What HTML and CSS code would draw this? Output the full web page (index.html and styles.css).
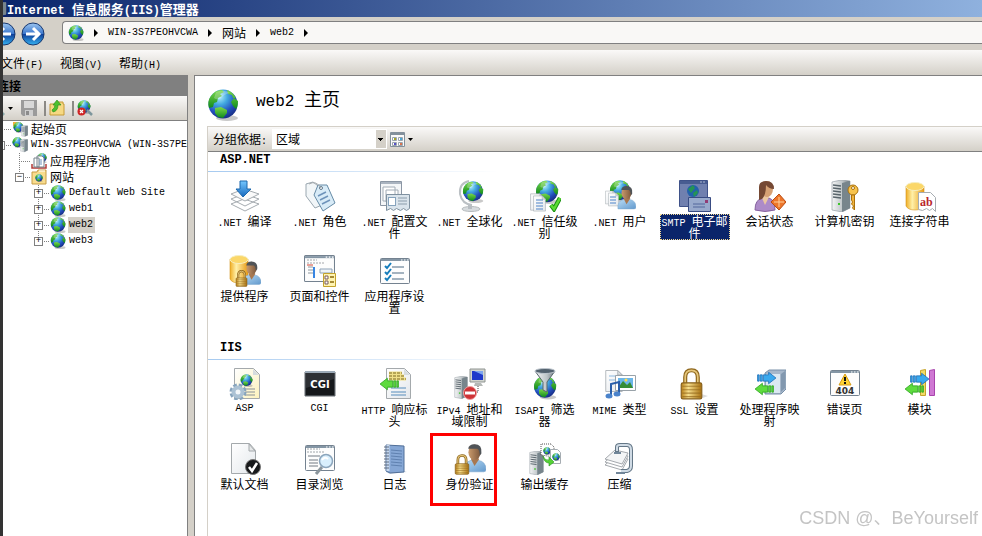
FILE: index.html
```
<!DOCTYPE html>
<html lang="zh-CN">
<head>
    <meta charset="UTF-8">
    <meta name="viewport" content="width=device-width, initial-scale=1.0">
    <title>Internet 信息服务(IIS)管理器</title>
    <link rel="stylesheet" href="styles.css">
</head>
<body>
    <!-- shared icon parts -->
    <svg class="defs" width="0" height="0" aria-hidden="true">
        <defs>
            <radialGradient id="sea" cx="38%" cy="25%" r="78%">
                <stop offset="0" stop-color="#b5f0fb"/><stop offset=".35" stop-color="#43a9e0"/>
                <stop offset=".7" stop-color="#2450bd"/><stop offset="1" stop-color="#182c83"/>
            </radialGradient>
            <linearGradient id="land" x2="0" y2="1"><stop stop-color="#7bd84a"/><stop offset="1" stop-color="#108a1c"/></linearGradient>
            <linearGradient id="gold"><stop stop-color="#b87f16"/><stop offset=".35" stop-color="#f7df8c"/><stop offset="1" stop-color="#a8700f"/></linearGradient>
            <linearGradient id="yellow"><stop stop-color="#efae25"/><stop offset=".35" stop-color="#fff0a8"/><stop offset="1" stop-color="#e79a16"/></linearGradient>
            <linearGradient id="metal"><stop stop-color="#f5f6f6"/><stop offset=".6" stop-color="#bcc3c6"/><stop offset="1" stop-color="#68747b"/></linearGradient>
            <linearGradient id="shirt" x2="1" y2="1"><stop stop-color="#b9dcf5"/><stop offset="1" stop-color="#6299cd"/></linearGradient>
            <linearGradient id="skin"><stop stop-color="#c99a6c"/><stop offset="1" stop-color="#7c573c"/></linearGradient>
            <linearGradient id="paper" x2="1" y2="1"><stop stop-color="#fff"/><stop offset="1" stop-color="#e4e8ec"/></linearGradient>
            <linearGradient id="cream" x2="1" y2="1"><stop stop-color="#fff"/><stop offset="1" stop-color="#fcf2bd"/></linearGradient>
            <linearGradient id="blue" x2="0" y2="1"><stop stop-color="#74c7ff"/><stop offset="1" stop-color="#1668bd"/></linearGradient>
            <linearGradient id="navball" x2="0" y2="1"><stop stop-color="#9dc6f0"/><stop offset=".48" stop-color="#3c78cd"/><stop offset=".52" stop-color="#0f4099"/><stop offset="1" stop-color="#36b4f3"/></linearGradient>
        </defs>
        <symbol id="globe" viewBox="0 0 32 32">
            <ellipse cx="20" cy="29" rx="11" ry="3" fill="#777" opacity=".4"/>
            <circle cx="16" cy="15" r="14.5" fill="url(#sea)"/>
            <path d="M4 7Q8 1 15 1l2 2-4 2 2 2-4 2-1 4-3 1-1 4-4 1Q0 12 4 7z" fill="url(#land)"/>
            <path d="M20 1q6 2 9 8l-3 0-1-3-4-1zM27 9l4 3q0 6-2 8l-3-3-2-4z" fill="url(#land)"/>
            <path d="M8 19l6-1 6 3 0 3-4 5-5-1-3-4z" fill="url(#land)"/>
            <path d="M9 3q8-3 14 1-6 1-10 6-4 1-6-1z" fill="#fff" opacity=".25"/>
        </symbol>
        <symbol id="person" viewBox="0 0 20 24">
            <path d="M1 24q-1-8 6-10h6q7 1 7 8 0 2-2 2z" fill="url(#shirt)" stroke="#7aa5cc" stroke-width=".5"/>
            <path d="M7 13l3 6 4-6-2-3H8z" fill="#a87850"/>
            <ellipse cx="10" cy="7" rx="5.3" ry="6.8" fill="url(#skin)"/>
            <path d="M4.500 4Q5 0 10 0q7 0 6 8l-1.500 2q0-5-2-6-4 0-8 0z" fill="#505458"/>
        </symbol>
        <symbol id="lock" viewBox="0 0 20 28">
            <path d="M4.500 14V8q0-6 5.500-6t5.500 6v6" fill="none" stroke="#8e661c" stroke-width="3.600"/>
            <path d="M4.500 14V8q0-6 5.500-6t5.500 6v6" fill="none" stroke="#e5c67a" stroke-width="1.500"/>
            <rect x="1" y="13" width="18" height="14" rx="1.500" fill="url(#gold)" stroke="#87601b"/>
            <path d="M2 16h16M2 19h16M2 22h16M2 25h16" stroke="#94691d" opacity=".7"/>
        </symbol>
        <symbol id="doc" viewBox="0 0 24 30">
            <path d="M1 1h16l6 6v22H1z" fill="url(#paper)" stroke="#9da4aa"/>
            <path d="M17 1v6h6z" fill="#dce0e3" stroke="#9da4aa"/>
        </symbol>
        <symbol id="window" viewBox="0 0 30 26">
            <rect x=".5" y=".5" width="29" height="25" rx="1" fill="#fdfdfd" stroke="#748290"/>
            <path d="M1 2h28" stroke="#8496a5" stroke-width="2"/>
            <path d="M21 2h1.500M24 2h1.500M27 2h1.500" stroke="#fff"/>
        </symbol>
        <symbol id="server" viewBox="0 0 20 32">
            <path d="M1 2l9-2 9 1v27l-8 4-10-2z" fill="url(#metal)" stroke="#88929a" stroke-width=".6"/>
            <path d="M11 3l8-2v27l-8 4z" fill="#77858c"/>
            <path d="M2 5l8 1M2 8l8 1M2 11l8 1M2 14l8 1M2 17l8 1" stroke="#59656c" stroke-width="1.300"/>
            <path d="M7 24h2" stroke="#3cc52a" stroke-width="2"/>
        </symbol>
        <symbol id="cylinder" viewBox="0 0 20 28">
            <path d="M1 4v20q2 4 9 4t9-4V4z" fill="url(#yellow)" stroke="#d4941c" stroke-width=".6"/>
            <ellipse cx="10" cy="4.500" rx="9" ry="4" fill="#fbd769" stroke="#f6eec0"/>
        </symbol>
        <symbol id="go-left" viewBox="0 0 20 12">
            <path d="M1 6l7-5.500V3h5v6H8v2.500zM14 3h2v6h-2zM17 3h1.500v6H17z" fill="#5edb3e" stroke="#239e19" stroke-width=".7"/>
        </symbol>
        <symbol id="go-right" viewBox="0 0 20 12">
            <path d="M19 6L12 .5V3H7v6h5v2.500zM4 3h2v6H4zM1.500 3H3v6H1.500z" fill="#39a9ee" stroke="#1667b3" stroke-width=".7"/>
        </symbol>
        <symbol id="crumb" viewBox="0 0 4 8"><path d="M0 0l4 4-4 4z"/></symbol>
        <symbol id="drop" viewBox="0 0 5 3"><path d="M0 0h5L2.500 3z"/></symbol>
    </svg>

    <header class="titlebar">
        <svg width="7" height="14" viewBox="13 0 7 32" preserveAspectRatio="none"><use href="#server" width="20" height="32"/></svg>
        <h1><span class="en">Internet </span>信息服务<span class="en">(IIS)</span>管理器</h1>
    </header>

    <nav class="navbar">
        <div class="history">
            <button type="button" aria-label="后退"><svg viewBox="0 0 24 24"><circle cx="12" cy="12" r="11" fill="url(#navball)" stroke="#17376e"/><path d="M19 12H7M12 6l-6 6 6 6" fill="none" stroke="#fff" stroke-width="3"/></svg></button>
            <button type="button" aria-label="前进"><svg viewBox="0 0 24 24"><circle cx="12" cy="12" r="11" fill="url(#navball)" stroke="#17376e"/><path d="M5 12h12M12 6l6 6-6 6" fill="none" stroke="#fff" stroke-width="3"/></svg></button>
        </div>
        <div class="address">
            <svg width="16" height="16"><use href="#globe"/></svg>
            <svg class="sep" width="4" height="8"><use href="#crumb"/></svg>
            <a href="#" class="en">WIN-3S7PEOHVCWA</a>
            <svg class="sep" width="4" height="8"><use href="#crumb"/></svg>
            <a href="#">网站</a>
            <svg class="sep" width="4" height="8"><use href="#crumb"/></svg>
            <a href="#" class="en">web2</a>
            <svg class="sep" width="4" height="8"><use href="#crumb"/></svg>
        </div>
    </nav>

    <div class="menubar">
        <button type="button">文件<span class="en">(F)</span></button>
        <button type="button">视图<span class="en">(V)</span></button>
        <button type="button">帮助<span class="en">(H)</span></button>
    </div>

    <div class="workspace">
        <aside class="connections">
            <h2>连接</h2>
            <div class="toolbar">
                <button type="button" aria-label="连接到"><svg width="16" height="16" viewBox="0 0 16 16"><use href="#globe" width="12" height="12"/><path d="M9 9l6 6" stroke="#8ba9a9" stroke-width="3"/></svg><svg width="5" height="3"><use href="#drop"/></svg></button>
                <button type="button" aria-label="保存" disabled><svg width="16" height="16" viewBox="0 0 16 16"><path d="M0 0h16v16H2l-2-2z" fill="#9b9b9b"/><path d="M3 1h10v7H3z" fill="#d8d8d8"/><path d="M4 10h8v6H4z" fill="#cfcfcf"/><path d="M5 11h3v4H5z" fill="#8c8c8c"/></svg></button>
                <i></i>
                <button type="button" aria-label="上移"><svg width="16" height="16" viewBox="0 0 16 16"><path d="M1 4h6l1-2h6v2h1v11H1z" fill="#f6d983" stroke="#c69a37"/><path d="M4 12q5-1 5-7h3L8 0 4 5h2q0 3-3 5z" fill="#4bc02d" stroke="#278818" stroke-width=".6"/></svg></button>
                <i></i>
                <button type="button" aria-label="删除连接"><svg width="16" height="16" viewBox="0 0 16 16"><use href="#globe" width="14" height="14"/><path d="M10 10l5 5" stroke="#7d969c" stroke-width="2.500"/><circle cx="4.500" cy="11.500" r="4" fill="#cf2424"/><path d="M3 10l3 3M6 10l-3 3" stroke="#fff" stroke-width="1.200"/></svg></button>
            </div>
            <ul class="tree">
                <li>
                    <div class="node"><span class="branch"></span><svg width="16" height="16" viewBox="0 0 16 16"><path d="M1 1h6v4H1z" fill="#f1b33a"/><use href="#globe" x="1" y="1" width="11" height="11"/><use href="#server" x="9" y="4" width="7" height="12"/></svg><a href="#">起始页</a></div>
                </li>
                <li>
                    <div class="node"><span class="branch"><button type="button" aria-label="折叠">−</button></span><svg width="16" height="16" viewBox="0 0 16 16"><use href="#globe" width="11" height="11"/><use href="#server" x="8" y="1" width="8" height="15"/></svg><a href="#" class="en">WIN-3S7PEOHVCWA (WIN-3S7PEOHVCWA\Administrator)</a></div>
                    <ul>
                        <li>
                            <div class="node"><span class="branch"></span><svg width="16" height="16" viewBox="0 0 16 16"><use href="#globe" x="6" width="10" height="10"/><path d="M1 11v4h14v-4" fill="none" stroke="#b33b38" stroke-width="1.500"/><path d="M3 5h5v9H3zM6 3h5l2 2v9H6z" fill="#fff" stroke="#77838c"/><path d="M8 7h3M8 9h3M8 11h3" stroke="#6b91ba"/></svg><a href="#">应用程序池</a></div>
                        </li>
                        <li>
                            <div class="node"><span class="branch last"><button type="button" aria-label="折叠">−</button></span><svg width="16" height="16" viewBox="0 0 16 16"><path d="M1 3h5l1-2h8v14H1z" fill="#f8dc8d" stroke="#c69c45"/><path d="M8 2h6" stroke="#fff"/><use href="#globe" x="4" y="5" width="8" height="8"/></svg><a href="#">网站</a></div>
                            <ul>
                                <li><div class="node"><span class="branch"><button type="button" aria-label="展开">+</button></span><svg width="16" height="16"><use href="#globe"/></svg><a href="#" class="en">Default Web Site</a></div></li>
                                <li><div class="node"><span class="branch"><button type="button" aria-label="展开">+</button></span><svg width="16" height="16"><use href="#globe"/></svg><a href="#" class="en">web1</a></div></li>
                                <li><div class="node"><span class="branch"><button type="button" aria-label="展开">+</button></span><svg width="16" height="16"><use href="#globe"/></svg><a href="#" class="en current">web2</a></div></li>
                                <li><div class="node"><span class="branch last"><button type="button" aria-label="展开">+</button></span><svg width="16" height="16"><use href="#globe"/></svg><a href="#" class="en">web3</a></div></li>
                            </ul>
                        </li>
                    </ul>
                </li>
            </ul>
        </aside>

        <main>
            <div class="page-title">
                <svg width="32" height="34"><use href="#globe"/></svg>
                <h2><span class="en">web2 </span>主页</h2>
            </div>
            <div class="features">
                <div class="groupbar">
                    <label for="groupBy">分组依据<span class="en">:</span></label>
                    <select id="groupBy">
                        <option>区域</option>
                        <option>类别</option>
                        <option>不进行分组</option>
                    </select>
                    <button type="button" aria-label="视图"><svg width="15" height="15" viewBox="0 0 15 15"><path d="M.5.5h14v14H.5z" fill="#fafafa" stroke="#83909b"/><path d="M1 2h13" stroke="#83909b" stroke-width="2"/><path d="M2.500 5.500h4v3h-4zM8.500 5.500h4v3h-4zM2.500 10.500h4v3h-4zM8.500 10.500h4v3h-4z" fill="#fff" stroke="#9aa5ad"/><path d="M4 7h2" stroke="#a5a428" stroke-width="2"/><path d="M10 7h2" stroke="#4ca6d3" stroke-width="2"/><path d="M4 12h2" stroke="#5550c7" stroke-width="2"/><path d="M10 12h2" stroke="#d87350" stroke-width="2"/></svg><svg width="5" height="3"><use href="#drop"/></svg></button>
                </div>

                <h3>ASP.NET</h3>
                <div class="items">
                    <a href="#"><svg viewBox="0 0 32 32"><path d="M2 24l13-5 15 5-14 7zM2 19l13-5 15 5-14 7z" fill="#fff" stroke="#a5abb0"/><path d="M2 14l13-5 15 5-14 7z" fill="#fafafa" stroke="#a5abb0"/><path d="M11 1h7v8h4l-8 8-7-8h4z" fill="url(#blue)" stroke="#1c68ae"/></svg><span><span class="en">.NET </span>编译</span></a>
                    <a href="#"><svg viewBox="0 0 32 32"><path d="M2 4l7-2 9 7v16l-7 3-9-12z" fill="#f2f6f8" stroke="#9aa7b0"/><path d="M14 5l9 0 8 18-12 8-9-16z" fill="#d8ebf7" stroke="#668ba6"/><path d="M14 16l8-4M16 20l8-4M18 24l8-4" stroke="#6e93ba" stroke-width="1.500"/><circle cx="17" cy="8" r="1.500" fill="#fff" stroke="#647a8c"/><path d="M17 8Q12 0 5 4" fill="none" stroke="#a5a9ac"/></svg><span><span class="en">.NET </span>角色</span></a>
                    <a href="#"><svg viewBox="0 0 32 32"><path d="M1.500 1.500h21v24h-21z" fill="#f4f6f8" stroke="#8b96a4"/><path d="M2 3h20" stroke="#aab4c0" stroke-width="2"/><path d="M4 7h12v14H4zM7 10h12v12H7z" fill="#fff" stroke="#a2acb6"/><path d="M7.500 14.500h23v14l-3 2-3-2-3 2-4-2-3 2-3-2-4 2z" fill="#dae4ec" stroke="#7f91a0"/><rect x="9.500" y="17.500" width="7" height="8" fill="#fff" stroke="#86a3bd"/><path d="M19 18h9M19 21h9M19 24h9" stroke="#8b9cab"/></svg><span><span class="en">.NET </span>配置文件</span></a>
                    <a href="#"><svg viewBox="0 0 32 32"><ellipse cx="17" cy="29" rx="9" ry="2.500" fill="#d7dbde" stroke="#b5babd"/><path d="M16 25v4" stroke="#b7bdc2" stroke-width="4"/><path d="M15 1Q5 3 6 14q2 10 12 11" fill="none" stroke="#bbc0c4" stroke-width="2"/><use href="#globe" x="8" y="1" width="22" height="22"/></svg><span><span class="en">.NET </span>全球化</span></a>
                    <a href="#"><svg viewBox="0 0 32 32"><use href="#globe" x="6" width="24" height="24"/><use href="#doc" x="1" y="13" width="14" height="18"/><use href="#doc" x="4" y="15" width="13" height="17"/><path d="M7 20h7M7 23h7M7 26h7M7 29h7" stroke="#4d83c9"/><path d="M22 25l3 4 6-11" fill="none" stroke="#189010" stroke-width="4.500"/><path d="M22 25l3 4 6-11" fill="none" stroke="#5bdb32" stroke-width="2.500"/></svg><span><span class="en">.NET </span>信任级别</span></a>
                    <a href="#"><svg viewBox="0 0 32 32"><use href="#globe" x="5" width="22" height="22"/><use href="#doc" x="1" y="10" width="11" height="15"/><use href="#doc" x="4" y="12" width="11" height="15"/><path d="M6 17h6M6 20h6M6 23h6" stroke="#4d83c9"/><use href="#person" x="13" y="4" width="19" height="27"/></svg><span><span class="en">.NET </span>用户</span></a>
                    <a href="#" class="selected"><svg viewBox="0 0 32 32"><path d="M.5.500h28v26H.5z" fill="#7080af" stroke="#3f5289"/><path d="M1 2.500h27" stroke="#485c91" stroke-width="3"/><path d="M21 2h2M24 2h2" stroke="#aab6d0"/><circle cx="14" cy="11" r="6" fill="#2361ab"/><path d="M9 9l5-4 2 3-4 5zM14 13l4-3 1 3-4 4z" fill="#259354"/><path d="M9.500 17.500h22v14h-22z" fill="#98a9cc" stroke="#394c83"/><path d="M14 24h12M14 27h12" stroke="#52679b"/><path d="M26 20h3v3h-3z" fill="#903c75"/></svg><span><span class="en">SMTP </span>电子邮件</span></a>
                    <a href="#"><svg viewBox="0 0 32 32"><path d="M1 30q0-11 8-12h6q6 2 6 12-10 3-20 0z" fill="#ad8bc8" stroke="#86639f"/><path d="M8 18l3 7 4-8-2-4H9z" fill="#ebc7a2"/><ellipse cx="13" cy="9" rx="6" ry="8" fill="#d6a174"/><path d="M5 20V7q0-6 7-6 8 0 8 8-5 0-8-4 0 10-4 14z" fill="#754833"/><path d="M25 14l7 8-7 8-8-8z" fill="#ed762b" stroke="#ba4c13"/><path d="M25 17v10M20 22h10" stroke="#ffd29e"/></svg><span>会话状态</span></a>
                    <a href="#"><svg viewBox="0 0 32 32"><use href="#server" x="2" y="0" width="20" height="32"/><circle cx="24" cy="10" r="5" fill="#f7c34d" stroke="#aa710c"/><circle cx="24" cy="8" r="1.500" fill="#fff" stroke="#aa710c"/><path d="M22.500 15h3v15l-2-2 1-2-2-2 1-2-1-2z" fill="#f1b33c" stroke="#aa710c"/></svg><span>计算机密钥</span></a>
                    <a href="#"><svg viewBox="0 0 32 32"><use href="#cylinder" x="1" y="0" width="20" height="32"/><path d="M14.500 12.500h12l5 5v14l-3-3-3 2-3-2-4 2-4-1z" fill="#fff" stroke="#a6acb1"/><text x="16" y="26" class="ab">ab</text></svg><span>连接字符串</span></a>
                    <a href="#"><svg viewBox="0 0 32 32"><use href="#cylinder" x="0" y="0" width="20" height="28"/><use href="#person" x="13" y="5" width="19" height="26"/><use href="#lock" x="6" y="15" width="13" height="17"/></svg><span>提供程序</span></a>
                    <a href="#"><svg viewBox="0 0 32 32"><use href="#window" x="0" y="0" width="31" height="27"/><path d="M3 5h10M3 8h17" stroke="#a3a6aa" stroke-dasharray="2 1"/><path d="M4 12h5M4 15h6M4 18h6" stroke="#8d979e"/><path d="M10 12v11" stroke="#3785e2" stroke-width="2"/><path d="M3 10h6" stroke="#d74735"/><path d="M16 14h12v4H16z" fill="#eef3f8" stroke="#8fa3b7"/><path d="M19.500 18.500h12v13h-12z" fill="#fff4b2" stroke="#c3a22d"/><path d="M21 21h3v3h-3zM21 26h3v3h-3z" fill="#fff" stroke="#785b5c"/><path d="M26 22h4M26 27h4" stroke="#a68b36" stroke-width="2"/></svg><span>页面和控件</span></a>
                    <a href="#"><svg viewBox="0 0 32 32"><use href="#window" x="1" y="3" width="30" height="26"/><path d="M13 12h12M13 18h12M13 24h12" stroke="#879aac" stroke-width="1.500"/><path d="M6 11l2 2 4-5M6 17l2 2 4-5M6 23l2 2 4-5" fill="none" stroke="#167dbc" stroke-width="2"/></svg><span>应用程序设置</span></a>
                </div>

                <h3>IIS</h3>
                <div class="items">
                    <a href="#"><svg viewBox="0 0 32 32"><path d="M5.500.5h19l6 6v24h-25z" fill="url(#cream)" stroke="#a4a9ac"/><path d="M24 1v6h6z" fill="#d6dcdf"/><use href="#globe" x="11" y="6" width="13" height="13"/><path d="M16 21h10M16 24h10M16 27h10" stroke="#899197"/><circle cx="9" cy="24" r="6" fill="none" stroke="#87a4bd" stroke-width="5" stroke-dasharray="3 1.700"/><circle cx="9" cy="24" r="4.500" fill="#f2f6f9" stroke="#acc2d4" stroke-width="4"/></svg><span class="en">ASP</span></a>
                    <a href="#"><svg viewBox="0 0 32 32"><path d="M1 4h30v24H1z" fill="#2d3034" stroke="#62686e"/><path d="M1 4h30" stroke="#9ba9b6" stroke-width="2"/><path d="M2 20l28-9v16H2z" fill="#15181b"/><text x="16" y="20" class="cgi">CGI</text></svg><span class="en">CGI</span></a>
                    <a href="#"><svg viewBox="0 0 32 32"><path d="M7.500.5h18l6 6v24h-24z" fill="url(#paper)" stroke="#a4a9ac"/><path d="M25 1v6h6z" fill="#d6dcdf"/><path d="M10 5h13M10 8h15M10 11h17" stroke="#f0e08a" stroke-width="3"/><path d="M10 5h13M10 8h15M10 11h17" stroke="#7d6a22" stroke-dasharray="3 1"/><path d="M12 20h15M12 24h15M12 27h15" stroke="#568dbc"/><use href="#go-left" x="0" y="9" width="21" height="14"/></svg><span><span class="en">HTTP </span>响应标头</span></a>
                    <a href="#"><svg viewBox="0 0 32 32"><use href="#server" x="0" y="8" width="14" height="23"/><path d="M16 1h15v13H16z" fill="#d2d5cf" stroke="#8f9491"/><path d="M18 3h11v9H18z" fill="#1f39ca"/><path d="M20 3h9v4z" fill="#7da5ee"/><path d="M21 15h6l2 3h-9z" fill="#b5b9b7"/><path d="M24 18v6h-5" fill="none" stroke="#444" stroke-dasharray="1 1"/><circle cx="16" cy="25" r="6.500" fill="#ce3337" stroke="#f2a1a1"/><path d="M11 25h10" stroke="#fff" stroke-width="3"/></svg><span><span class="en">IPv4 </span>地址和域限制</span></a>
                    <a href="#"><svg viewBox="0 0 32 32"><use href="#globe" x="4" y="7" width="24" height="25"/><path d="M6 3l8 11v8l4 2V14l8-11z" fill="url(#metal)" stroke="#59666f"/><ellipse cx="16" cy="3" rx="10" ry="2.500" fill="#52616e" stroke="#bdc5cd"/></svg><span><span class="en">ISAPI </span>筛选器</span></a>
                    <a href="#"><svg viewBox="0 0 32 32"><use href="#doc" x="1" y="0" width="18" height="26"/><path d="M5 8h7M5 12h9" stroke="#8eb9df"/><path d="M11.500 7.500h20v15h-20z" fill="#fff" stroke="#99a2a9"/><path d="M14 10h15v10H14z" fill="#6bb6e9"/><path d="M14 20l5-7 4 4 3-3 3 6z" fill="#378d35"/><circle cx="22" cy="12" r="1.500" fill="#ffdc4b"/><path d="M7 27V16l8-2v11" fill="none" stroke="#285da9" stroke-width="2"/><ellipse cx="5" cy="28" rx="3.500" ry="2.500" fill="#4b83cb"/><ellipse cx="13" cy="26" rx="3.500" ry="2.500" fill="#4b83cb"/></svg><span><span class="en">MIME </span>类型</span></a>
                    <a href="#"><svg viewBox="0 0 32 32"><path d="M19 25l10 3-8 3z" fill="#ddd"/><use href="#lock" x="1" y="0" width="23" height="32"/></svg><span><span class="en">SSL </span>设置</span></a>
                    <a href="#"><svg viewBox="0 0 32 32"><path d="M11 5l4-3h17v19l-5 5H11z" fill="#a6b7ca" stroke="#7890a9"/><path d="M12 6h14v19H12z" fill="#dbe8f2"/><path d="M27 6l4-3v17l-4 4z" fill="#8298af"/><use href="#go-right" x="2" y="3" width="21" height="14"/><use href="#go-left" x="0" y="14" width="21" height="14"/></svg><span>处理程序映射</span></a>
                    <a href="#"><svg viewBox="0 0 32 32"><use href="#window" x="1" y="2" width="30" height="26"/><path d="M16 6l6 11H10z" fill="#ffd534" stroke="#d79c16"/><path d="M16 9v4M16 14v2" stroke="#111" stroke-width="2"/><text x="16" y="26" class="code">404</text></svg><span>错误页</span></a>
                    <a href="#"><svg viewBox="0 0 32 32"><path d="M16.500 2.500l5-1v26h-5z" fill="#f2da67" stroke="#c6a42c"/><path d="M25.500 2.500l5-1v26h-5z" fill="#cf78d3" stroke="#a844ad"/><use href="#go-right" x="5" y="4" width="21" height="14"/><use href="#go-left" x="0" y="14" width="21" height="14"/></svg><span>模块</span></a>
                    <a href="#"><svg viewBox="0 0 32 32"><path d="M2.500.5h18l6 7v23h-24z" fill="url(#paper)" stroke="#a4a9ac"/><path d="M20 1v7h6z" fill="#e6e8e9" stroke="#a4a9ac"/><circle cx="24" cy="24" r="7.500" fill="#17191b" stroke="#777"/><path d="M20 24l3 4 5-8" fill="none" stroke="#fff" stroke-width="2.500"/></svg><span>默认文档</span></a>
                    <a href="#"><svg viewBox="0 0 32 32"><use href="#window" x="1" y="2" width="30" height="26"/><path d="M3 6h13M3 9h17" stroke="#a0a6aa" stroke-dasharray="2 1"/><path d="M4 13h12M5 17h9M5 20h9M5 23h9" stroke="#727b83"/><path d="M18 24l-6 7" stroke="#8b969d" stroke-width="3"/><circle cx="22" cy="18" r="6.500" fill="#d9effd" stroke="#8ba5bc" stroke-width="1.500"/><path d="M18 17q3-4 6-1" stroke="#fff" stroke-width="2" fill="none"/></svg><span>目录浏览</span></a>
                    <a href="#"><svg viewBox="0 0 32 32"><path d="M8 2l17 1v25l3 1-17 2-4-2z" fill="#d3dbe6"/><path d="M7 2l18 1v26l-14 1-4-2z" fill="#86a7d5" stroke="#516f98"/><path d="M9 2v26" stroke="#c8d9ef" stroke-width="3"/><path d="M5 4h5M5 7h5M5 10h5M5 13h5M5 16h5M5 19h5M5 22h5M5 25h5" stroke="#5f6d80"/><path d="M12 7l11 1M12 10l11 1M12 13l11 1M12 16l11 1M12 19l11 1M12 22l11 1" stroke="#5f81b0"/></svg><span>日志</span></a>
                    <a href="#" class="marked"><svg viewBox="0 0 32 32"><use href="#person" x="9" y="0" width="23" height="30"/><use href="#lock" x="0" y="11" width="16" height="21"/></svg><span>身份验证</span></a>
                    <a href="#"><svg viewBox="0 0 32 32"><use href="#server" x="0" y="8" width="15" height="24"/><path d="M12 12V1h10l3 3v10z" fill="#fff" stroke="#555" stroke-dasharray="1 1"/><use href="#globe" x="14" y="4" width="8" height="8"/><path d="M21.500 6.500h7l3 3v11h-10z" fill="#fff" stroke="#a6adb2"/><use href="#globe" x="23" y="10" width="8" height="8"/><path d="M14 13q2 5 6 4v-3l5 5-5 4v-3q-5 0-6-7z" fill="#55d135" stroke="#239518" stroke-width=".6"/></svg><span>输出缓存</span></a>
                    <a href="#"><svg viewBox="0 0 32 32"><path d="M1 22l10-9 13 3-6 11z" fill="#fff" stroke="#a5a9ae"/><path d="M1 19l10-9 13 3-6 11z" fill="#fff" stroke="#a5a9ae"/><path d="M1 16l10-9 13 3-6 11z" fill="#f4f5f6" stroke="#a5a9ae"/><path d="M13 9V4q0-2 3-2h7q4 0 4 5v16q0 4-4 5h-6" fill="none" stroke="#647787" stroke-width="4"/><path d="M13 8V4q0-2 3-2h7q4 0 4 5v16q0 4-4 5h-6" fill="none" stroke="#d0dbe5" stroke-width="2"/><path d="M10 10h7M12 30h9" stroke="#718699" stroke-width="2"/></svg><span>压缩</span></a>
                </div>
            </div>
        </main>
    </div>
    <div class="watermark">CSDN @、BeYourself</div>
</body>
</html>
```
FILE: styles.css
```
*, *::before, *::after {
    box-sizing: border-box;
}
body {
    margin: 0;
    min-height: 100vh;
    display: flex;
    flex-direction: column;
    overflow: hidden;
    background-color: #d4d0c8;
    color: #000;
    font: 12px/16px "Noto Sans CJK SC", sans-serif;
}
/* dark window edge */
body::before {
    content: "";
    position: fixed;
    z-index: 2;
    top: 0;
    bottom: 0;
    left: 0;
    width: 3px;
    background-color: #333;
}
h1, h2, h3, ul {
    margin: 0;
    padding: 0;
}
a {
    color: inherit;
    text-decoration: none;
}
button {
    padding: 0;
    border: 0;
    background: none;
    color: inherit;
    font: inherit;
}
svg {
    display: block;
    flex: none;
}
.defs {
    position: absolute;
}
.en {
    font-family: "Liberation Mono", monospace;
    font-size: 10px;
    white-space: pre-wrap;
}
span > .en, h1 > .en, h2 > .en, button > .en, label > .en {
    line-height: 0;
}
.titlebar {
    display: flex;
    align-items: center;
    height: 17px;
    background: linear-gradient(90deg, #0a246a, #8fb1de);
    color: #fff;
}
.titlebar h1 {
    font-size: 13px;
    line-height: 17px;
}
.titlebar .en {
    font-size: 12px;
}
.navbar {
    display: flex;
    height: 33px;
    padding-top: 4px;
}
.history {
    display: flex;
    gap: 5px;
    width: 62px;
    margin-left: -8px;
    margin-right: 8px;
}
.history button {
    width: 24px;
    height: 26px;
}
.history svg {
    width: 24px;
    height: 24px;
}
.address {
    flex: 1;
    display: flex;
    align-items: center;
    gap: 10px;
    height: 23px;
    padding-left: 5px;
    border: 1px solid #808080;
    border-right: 0;
    border-radius: 4px 0 0 4px;
    background-color: #f9f8f6;
}
.menubar {
    display: flex;
    gap: 17px;
    height: 25px;
    padding-left: 1px;
    background: linear-gradient(#faf9f8, #d4d0c8);
}
.workspace {
    flex: 1;
    display: flex;
    gap: 6px;
}
.connections {
    width: 188px;
    overflow: hidden;
    border-right: 1px solid #808080;
    background-color: #fff;
}
.connections h2 {
    height: 21px;
    margin-left: -4px;
    padding-left: 1px;
    background-color: #808080;
    font-size: 12px;
    line-height: 21px;
}
.toolbar {
    display: flex;
    align-items: center;
    gap: 3px;
    height: 25px;
    border-bottom: 1px solid #808080;
    background: linear-gradient(#faf9f8, #d4d0c8);
}
.toolbar button {
    display: flex;
    align-items: center;
    gap: 3px;
}
.toolbar button:first-child {
    margin-left: -11px;
    margin-right: 5px;
}
.toolbar i {
    width: 2px;
    height: 15px;
    margin-left: 4px;
    background-color: #8c8a86;
}
.tree {
    margin-left: -4px;
}
.tree ul {
    padding-left: 19px;
}
.tree li {
    list-style: none;
}
.node {
    display: flex;
    align-items: center;
    height: 16px;
}
.node a {
    margin-left: 2px;
    padding: 0 1px;
    line-height: 16px;
    white-space: nowrap;
}
.node .current {
    padding: 0 2px 0 1px;
    background-color: #d4d0c8;
}
.branch {
    flex: none;
    width: 16px;
    height: 16px;
    padding-top: 4px;
    background:
        repeating-linear-gradient(90deg, #808080 0 1px, transparent 1px 2px) 4px 8px / 12px 1px no-repeat,
        repeating-linear-gradient(#808080 0 1px, transparent 1px 2px) 4px 0 / 1px 16px no-repeat;
}
.branch.last {
    background-size: 12px 1px, 1px 8px;
}
.branch button {
    display: block;
    width: 9px;
    height: 9px;
    border: 1px solid #808080;
    background-color: #fff;
    font: 9px/7px "Liberation Mono", monospace;
}
main {
    flex: 1;
    display: flex;
    flex-direction: column;
    min-width: 0;
    padding-left: 12px;
    border-top: 1px solid #808080;
    border-left: 1px solid #808080;
    background-color: #fff;
}
.page-title {
    display: flex;
    gap: 17px;
    height: 50px;
    padding-top: 12px;
}
.page-title h2 {
    font-size: 18px;
    font-weight: normal;
    line-height: 20px;
}
.page-title .en {
    font-size: 16px;
}
.features {
    flex: 1;
    border-top: 1px solid #d4d0c8;
    border-left: 1px solid #d4d0c8;
}
.groupbar {
    display: flex;
    align-items: center;
    height: 25px;
    padding-left: 5px;
    border-bottom: 1px solid #808080;
    background: linear-gradient(#faf9f8, #d4d0c8);
}
.groupbar select {
    width: 115px;
    height: 20px;
    margin: 0 3px 0 5px;
    padding: 0 0 0 3px;
    appearance: none;
    border: 1px solid #fff;
    border-radius: 0;
    background:
        linear-gradient(#000, #000) right 3px top 8px / 5px 1px no-repeat,
        linear-gradient(#000, #000) right 4px top 9px / 3px 1px no-repeat,
        linear-gradient(#000, #000) right 5px top 10px / 1px 1px no-repeat,
        linear-gradient(#d4d0c8, #d4d0c8) right / 10px 100% no-repeat,
        #fff;
    color: #000;
    font: inherit;
}
.groupbar button {
    display: flex;
    align-items: center;
    gap: 3px;
}
.features h3 {
    height: 20px;
    padding-left: 12px;
    background: linear-gradient(90deg, #a6caf0, #fff) left bottom / 290px 1px no-repeat;
    font: bold 12px/16px "Liberation Mono", monospace;
}
.items {
    display: grid;
    grid-template-columns: repeat(auto-fill, 75px);
    grid-auto-rows: 75px;
    margin-left: -1px;
    padding: 8px 0 10px;
}
.items > a {
    position: relative;
    display: flex;
    flex-direction: column;
    align-items: center;
    gap: 2px;
}
.items svg {
    width: 32px;
    height: 32px;
}
.items > a > span {
    max-width: 70px;
    padding: 1px;
    line-height: 12px;
    text-align: center;
}
.items .selected > span {
    background-color: #0a246a;
    color: #fff;
    outline: 1px dotted #f5db95;
    outline-offset: -1px;
}
/* red frame round the item to open */
.marked::after {
    content: "";
    position: absolute;
    top: -10px;
    left: -2px;
    width: 67px;
    height: 73px;
    border: 3px solid #f00;
}
.ab {
    fill: #b8252c;
    font: bold 12px "Liberation Serif", serif;
}
.cgi {
    fill: #fff;
    font: bold 10px "DejaVu Sans", sans-serif;
    text-anchor: middle;
}
.code {
    fill: #333;
    font: bold 9px "DejaVu Sans", sans-serif;
    text-anchor: middle;
}
.watermark {
    position: fixed;
    right: 4px;
    bottom: 6px;
    color: #c4c4c4;
    font: 18px/24px "Liberation Sans", "Noto Sans CJK SC", sans-serif;
}
```
